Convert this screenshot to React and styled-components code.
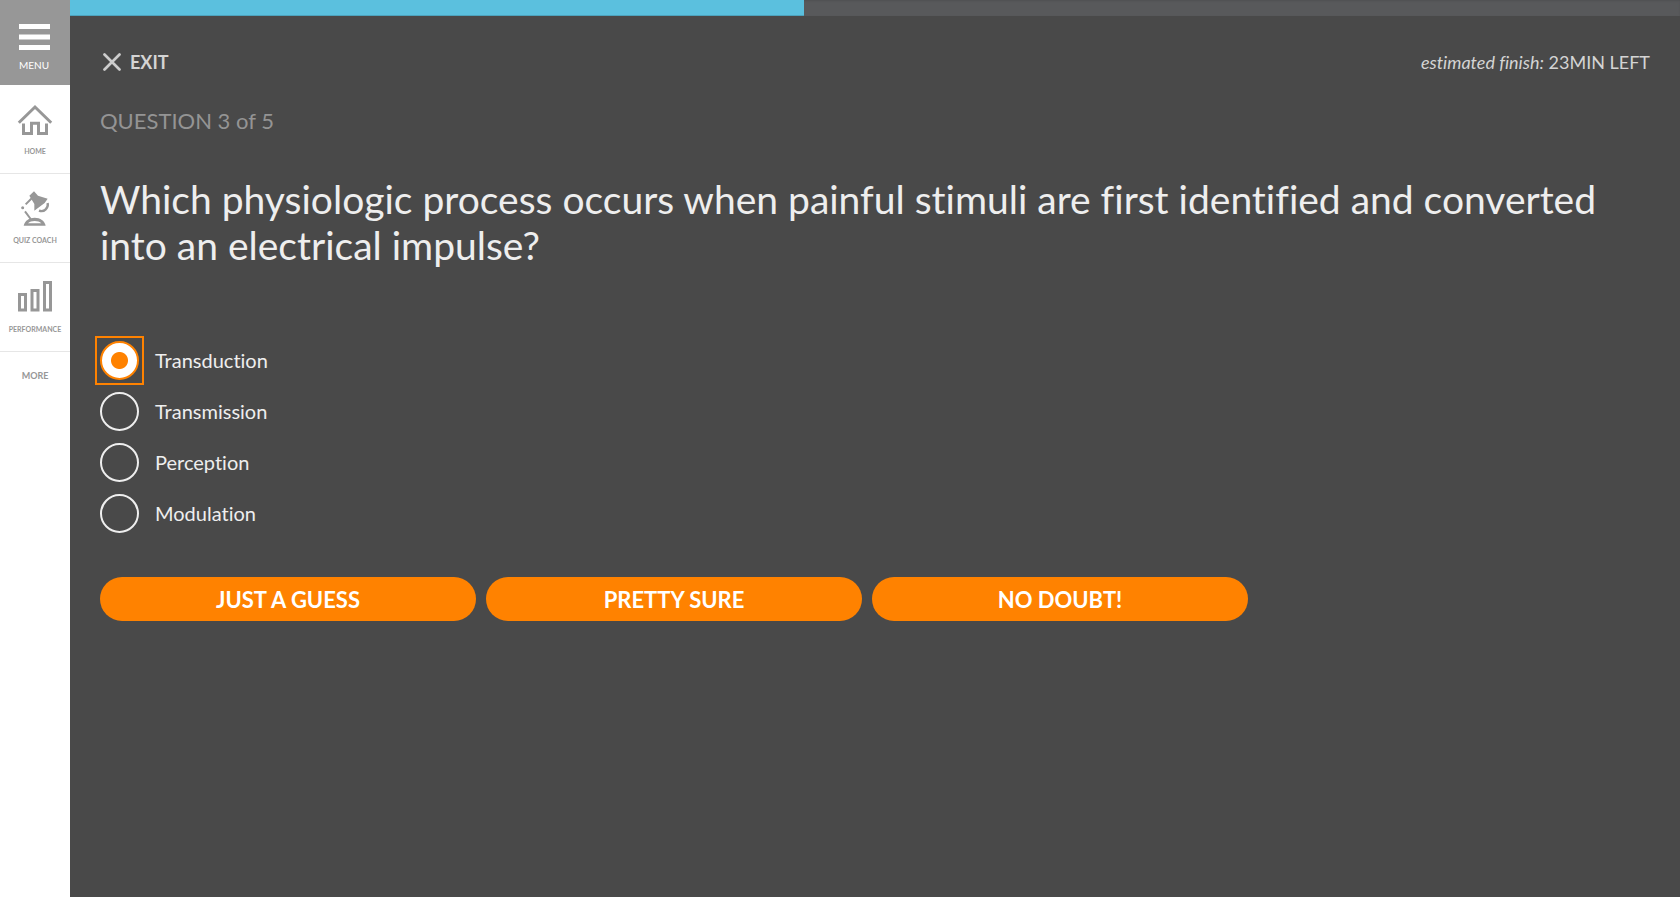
import React, { useState } from "react";
import styled, { createGlobalStyle } from "styled-components";

const orange = "#ff8200";
const grey = "#979797";

const GlobalStyle = createGlobalStyle`
  *, *::before, *::after { box-sizing: border-box; }
  body {
    margin: 0;
    background: #494949;
    color: #eee;
    font-family: Lato, "Open Sans", sans-serif;
    font-variant-ligatures: no-common-ligatures;
  }
  button, input { font: inherit; }
`;

const Page = styled.div`
  display: flex;
  min-height: 100vh;
`;

const Sidebar = styled.nav`
  flex: 0 0 70px;
  display: flex;
  flex-direction: column;
  background: #fff;
`;

const MenuButton = styled.button`
  height: 85px;
  padding: 24px 2px 0 0;
  border: 0;
  background: ${grey};
  color: #fff;
  display: flex;
  flex-direction: column;
  align-items: center;
  gap: 8px;
  font-size: 10px;
  line-height: 14px;
  cursor: pointer;
`;

const NavLink = styled.a`
  height: 89px;
  padding-top: 17px;
  border-bottom: 1px solid #e6e6e6;
  color: ${grey};
  display: flex;
  flex-direction: column;
  align-items: center;
  gap: 8px;
  font-size: 7px;
  font-weight: 700;
  line-height: 10px;
  text-decoration: none;
`;

const MoreLink = styled.a`
  padding-top: 17px;
  color: ${grey};
  font-size: 9px;
  font-weight: 700;
  line-height: 14px;
  text-align: center;
  text-decoration: none;
`;

const Main = styled.main`
  flex: 1;
  min-width: 0;
`;

const ProgressTrack = styled.div`
  height: 16px;
  background: #58595b;
  box-shadow: inset 0 1px 2px rgba(0, 0, 0, 0.1);
`;

const ProgressFill = styled.div`
  height: 100%;
  background: #5bc0de;
  box-shadow: inset 0 -1px 0 rgba(0, 0, 0, 0.15);
`;

const Content = styled.div`
  padding: 32px 30px;
`;

const TopBar = styled.header`
  display: flex;
  justify-content: space-between;
  align-items: center;
  height: 28px;
  color: #d4d4d4;
`;

const ExitLink = styled.a`
  display: flex;
  align-items: center;
  gap: 9px;
  padding-left: 3px;
  color: inherit;
  font-size: 18px;
  font-weight: 700;
  text-decoration: none;
`;

const Estimate = styled.p`
  margin: 0;
  font-size: 18px;
  line-height: 28px;
`;

const Counter = styled.p`
  margin: 31px 0 0;
  color: #949494;
  font-size: 22px;
  line-height: 28px;
`;

const Question = styled.h1`
  margin: 41px 0 0;
  font-size: 39px;
  font-weight: 400;
  line-height: 46px;
`;

const Options = styled.fieldset`
  margin: 73px 0 0;
  padding: 0;
  border: 0;
  display: flex;
  flex-direction: column;
  align-items: flex-start;
  gap: 12px;
`;

const Option = styled.label`
  display: flex;
  align-items: center;
  gap: 16px;
  font-size: 20px;
  line-height: 39px;
  cursor: pointer;
`;

const RadioFrame = styled.span`
  display: flex;
  outline: ${(p) => (p.$active ? `2px solid ${orange}` : "none")};
  outline-offset: 3px;
`;

const Radio = styled.input`
  appearance: none;
  width: 39px;
  height: 39px;
  margin: 0;
  border: 2px solid #eee;
  border-radius: 50%;
  outline: none;
  cursor: pointer;

  &:checked {
    border-color: ${orange};
    background: radial-gradient(circle, ${orange} 8px, #fff 9px);
  }
`;

const Answers = styled.div`
  display: grid;
  grid-template-columns: repeat(3, 1fr);
  gap: 10px;
  max-width: 1148px;
  margin-top: 44px;
`;

const AnswerButton = styled.button`
  height: 44px;
  padding: 0 16px;
  border: 0;
  border-radius: 22px;
  background: ${orange};
  color: #fff;
  font-size: 22px;
  font-weight: 700;
  cursor: pointer;
`;

const BarsIcon = () => (
  <svg width="31" height="26" viewBox="0 0 31 26" fill="#fff" aria-hidden="true">
    <path d="M0 0h31v5H0zM0 10.5h31v5H0zM0 21h31v5H0z" />
  </svg>
);

const HomeIcon = () => (
  <svg width="36" height="36" viewBox="17 102 36 36" fill="none" stroke={grey} strokeWidth="3" aria-hidden="true">
    <path d="M18.8 122.8 35 107l16.2 15.8" />
    <path d="M23.5 123.5v10h8v-10.2h7v10.2h8v-10" />
  </svg>
);

const LampIcon = () => (
  <svg width="36" height="36" viewBox="52 61 108 108" fill="none" stroke={grey} aria-hidden="true">
    <path d="M89 75 103 62l12 13 29 9-9 13-31 23v-20z" fill={grey} stroke="none" />
    <path d="M144 97c3 14-10 29-26 23" strokeWidth="7" />
    <path d="M97 82 78 101M76 122l17 23" strokeWidth="6" />
    <circle cx="69" cy="111" r="4.5" fill={grey} stroke="none" />
    <path d="M72 165c3-15 16-24 33-24s30 9 33 24z" fill={grey} stroke="none" />
    <path d="M85 158c9-9 31-9 40 0z" fill="#fff" stroke="none" />
  </svg>
);

const ChartIcon = () => (
  <svg width="36" height="36" viewBox="17 280 36 36" fill="none" stroke={grey} strokeWidth="3" aria-hidden="true">
    <path d="M19.5 294.5h6v15.500h-6zM32 290.5h6v19.5h-6zM44.5 282.5h6v27.5h-6z" />
  </svg>
);

const CloseIcon = () => (
  <svg width="18" height="18" viewBox="0 0 18 18" stroke="#ccc" strokeWidth="2.7" strokeLinecap="round" aria-hidden="true">
    <path d="M1.5 1.5l15 15M16.5 1.5l-15 15" />
  </svg>
);

const choices = ["Transduction", "Transmission", "Perception", "Modulation"];
const answers = ["JUST A GUESS", "PRETTY SURE", "NO DOUBT!"];
const progress = 45.6;

export default function App() {
  const [selected, setSelected] = useState(choices[0]);
  return (
    <Page>
      <GlobalStyle />
      <Sidebar>
        <MenuButton type="button"><BarsIcon />MENU</MenuButton>
        <NavLink href="#home"><HomeIcon />HOME</NavLink>
        <NavLink href="#quiz-coach"><LampIcon />QUIZ COACH</NavLink>
        <NavLink href="#performance"><ChartIcon />PERFORMANCE</NavLink>
        <MoreLink href="#more">MORE</MoreLink>
      </Sidebar>
      <Main>
        <ProgressTrack role="progressbar" aria-label="Quiz progress" aria-valuenow={progress}>
          <ProgressFill style={{ width: `${progress}%` }} />
        </ProgressTrack>
        <Content>
          <TopBar>
            <ExitLink href="#exit"><CloseIcon />EXIT</ExitLink>
            <Estimate><em>estimated finish:</em> 23MIN LEFT</Estimate>
          </TopBar>
          <Counter>QUESTION 3 of 5</Counter>
          <Question id="question">
            Which physiologic process occurs when painful stimuli are first identified and converted into an electrical impulse?
          </Question>
          <Options aria-labelledby="question">
            {choices.map((choice) => (
              <Option key={choice}>
                <RadioFrame $active={selected === choice}>
                  <Radio
                    type="radio"
                    name="answer"
                    checked={selected === choice}
                    onChange={() => setSelected(choice)}
                  />
                </RadioFrame>
                {choice}
              </Option>
            ))}
          </Options>
          <Answers>
            {answers.map((answer) => (
              <AnswerButton type="button" key={answer}>{answer}</AnswerButton>
            ))}
          </Answers>
        </Content>
      </Main>
    </Page>
  );
}
